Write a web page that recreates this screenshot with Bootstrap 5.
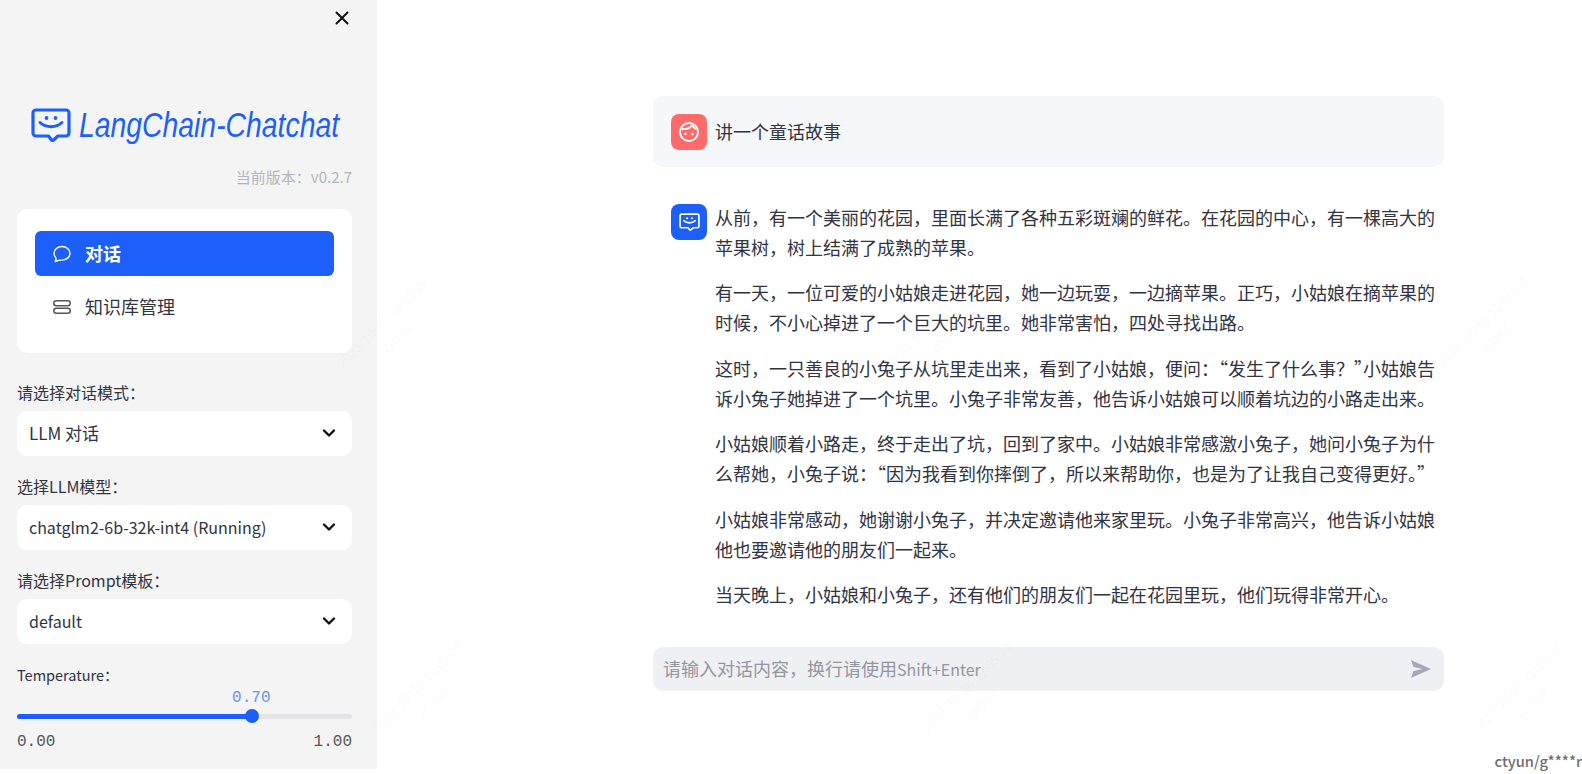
<!DOCTYPE html>
<html lang="zh-CN">
<head>
  <meta charset="UTF-8" />
  <title>LangChain-Chatchat</title>
  <meta name="viewport" content="width=device-width, initial-scale=1" />
  <link rel="stylesheet" href="https://cdn.jsdelivr.net/npm/bootstrap@5.3.0/dist/css/bootstrap.min.css" />
  <style>
    html, body { height: 774px; overflow: hidden; }
    body { font-family: "Noto Sans CJK SC", "Noto Sans", sans-serif; color: #31333f; background: #fff; }
    .side-panel { width: 377px; height: 769px; background: #f4f4f5; padding: 0 25px 0 17px; flex-shrink: 0; }
    .side-panel > * { flex-shrink: 0; }
    .close-btn { height: 36px; padding-right: 3px; margin-bottom: -2px; }
    .logo-row { margin-top: 74px; height: 34px; padding-left: 14px; color: #1c5ffb; }
    .logo-row svg { flex-shrink: 0; }
    .logo-text { font-family: "Liberation Sans", sans-serif; font-style: italic; font-size: 35px; line-height: 34px; white-space: nowrap; transform: scaleX(.81); transform-origin: left center; }
    .version-line { margin-top: 25px; font-size: 15px; line-height: 20px; color: #b3b5ba; }
    .menu-box { margin-top: 22px; height: 144px; background: #fff; border-radius: 10px; padding: 22px 18px; }
    .menu-item { height: 45px; border-radius: 6px; padding-left: 18px; font-size: 18px; gap: 14px; color: #31333f; }
    .menu-item.is-active { background: #1c5ffb; color: #fff; font-weight: 700; }
    .menu-item + .menu-item { margin-top: 8px; }
    .field-label { font-size: 16px; line-height: 24px; margin-bottom: 7px; color: #31333f; }
    .first-label { margin-top: 27px; }
    .model-select { height: 45px; border: 0; border-radius: 10px; padding: 0 36px 2px 12px; font-size: 16px; color: #31333f; margin-bottom: 18px;
      background-color: #fff; background-position: right 16px top 17px; background-size: 14px 10px;
      background-image: url("data:image/svg+xml,%3csvg xmlns='http://www.w3.org/2000/svg' viewBox='0 0 14 10'%3e%3cpath fill='none' stroke='%23111' stroke-width='2.4' stroke-linecap='round' stroke-linejoin='round' d='M2 2.5l5 5 5-5'/%3e%3c/svg%3e"); }
    .model-select.mode-select { font-size: 17px; }
    .temp-label { font-size: 14.5px; line-height: 26px; }
    .mono-num { font-family: "Liberation Mono", monospace; font-size: 16px; line-height: 18px; color: #555; }
    .temp-value { color: #6f8ff5; width: calc(70% + 19px); text-align: right; margin-top: 1px; }
    .track-wrap { height: 14px; margin-top: 2px; position: relative; }
    .temp-track { height: 5px; background: #e4e4e7; border-radius: 3px; }
    .temp-track .progress-bar { background: #1c5ffb; }
    .temp-thumb { position: absolute; top: 0; left: calc(70% - 7px); width: 14px; height: 14px; border-radius: 50%; background: #1c5ffb; }
    .range-ends { margin-top: 10px; }
    .chat-col { width: 791px; margin-left: 276px; padding-top: 96px; font-size: 18px; line-height: 29.6px; color: #31333f; }
    .msg-box { border-radius: 10px; padding: 17px 18px; gap: 8px; }
    .msg-user { background: #f6f7f9; height: 71px; align-items: center; }
    .msg-bot { margin-top: 20px; padding-top: 16px; padding-bottom: 0; height: 455px; padding-right: 8px; }
    .msg-bot p { margin-bottom: 16.3px; }
    .avatar-box { width: 36px; height: 36px; border-radius: 8px; flex-shrink: 0; }
    .msg-bot .avatar-box { margin-top: 1px; }
    .avatar-user { background: #ff6b6b; }
    .avatar-bot { background: #1c5ffb; }
    .close-quote { font-feature-settings: "halt"; }
    .input-bar { height: 44px; background: #eff0f4; border-radius: 10px; padding: 0 12px 0 10px; margin-top: 5px; color: #94969f; }
    .hint-key { font-size: 16px; }
    .account-tag { position: absolute; right: 0; bottom: 3px; font-size: 14.7px; line-height: 20px; font-weight: 500; color: #6e6e6e; }
    .mark-layer { position: absolute; inset: 0; pointer-events: none; overflow: hidden; }
    .mark-row { gap: 360px; }
    .mark-row.upper { padding: 308px 0 0 295px; }
    .mark-row.lower { padding: 321px 0 0 330px; }
    .mark-item { transform: rotate(-45deg); width: 190px; flex-shrink: 0; text-align: center; font-size: 13px; line-height: 22px; color: rgba(120, 120, 130, .05); white-space: nowrap; }
  </style>
</head>
<body class="position-relative">
  <svg width="0" height="0" class="position-absolute">
    <symbol id="botFace" viewBox="0 0 40 34">
      <path d="M5 2h30a3 3 0 0 1 3 3v20a3 3 0 0 1-3 3h-8l-4.500 4a1.500 1.500 0 0 1-2 0l-3-4H5a3 3 0 0 1-3-3V5a3 3 0 0 1 3-3z" fill="none" stroke="currentColor" stroke-width="3.200" stroke-linejoin="round" />
      <circle cx="15.500" cy="10" r="1.900" fill="currentColor" />
      <circle cx="24.500" cy="10" r="1.900" fill="currentColor" />
      <path d="M9 14.500c6 5.500 16 5.500 22 0" fill="none" stroke="currentColor" stroke-width="3" stroke-linecap="round" />
    </symbol>
  </svg>

  <div class="d-flex">
    <aside class="side-panel d-flex flex-column">
      <div class="close-btn d-flex justify-content-end align-items-center">
        <svg width="14" height="14" viewBox="0 0 14 14"><path d="M1.500 1.500l11 11M12.500 1.500l-11 11" stroke="#111" stroke-width="2" stroke-linecap="round" /></svg>
      </div>
      <div class="logo-row d-flex align-items-center gap-2">
        <svg width="40" height="34"><use href="#botFace" /></svg>
        <span class="logo-text">LangChain-Chatchat</span>
      </div>
      <div class="version-line text-end">当前版本：v0.2.7</div>

      <div class="menu-box">
        <div class="menu-item is-active d-flex align-items-center">
          <svg width="18" height="18" viewBox="0 0 18 18"><path d="M9 1.500c4.400 0 8 3 8 6.800s-3.600 6.800-8 6.800c-1.500 0-3-.1-6.800 1.400.8-1.500 1-2.600.7-3.600C1.800 11.700 1 10 1 8.300 1 4.500 4.600 1.500 9 1.500z" fill="none" stroke="#fff" stroke-width="1.400" stroke-linejoin="round" /></svg>
          <span>对话</span>
        </div>
        <div class="menu-item d-flex align-items-center">
          <svg width="18" height="14" viewBox="0 0 18 14"><rect x=".8" y=".8" width="16.400" height="5" rx="2.500" fill="none" stroke="#555" stroke-width="1.500" /><rect x=".8" y="8.200" width="16.400" height="5" rx="2.500" fill="none" stroke="#555" stroke-width="1.500" /></svg>
          <span>知识库管理</span>
        </div>
      </div>

      <label class="field-label first-label">请选择对话模式：</label>
      <select class="form-select model-select mode-select"><option>LLM 对话</option></select>
      <label class="field-label">选择LLM模型：</label>
      <select class="form-select model-select"><option>chatglm2-6b-32k-int4 (Running)</option></select>
      <label class="field-label">请选择Prompt模板：</label>
      <select class="form-select model-select"><option>default</option></select>

      <div class="temp-label">Temperature：</div>
      <div class="mono-num temp-value">0.70</div>
      <div class="track-wrap d-flex align-items-center">
        <div class="progress temp-track w-100"><div class="progress-bar" style="width: 70%"></div></div>
        <div class="temp-thumb"></div>
      </div>
      <div class="d-flex justify-content-between mono-num range-ends"><span>0.00</span><span>1.00</span></div>
    </aside>

    <main class="chat-col">
      <div class="msg-box msg-user d-flex">
        <div class="avatar-box avatar-user d-flex align-items-center justify-content-center">
          <svg width="24" height="24" viewBox="0 0 24 24" fill="none" stroke="#fff" stroke-width="2"><circle cx="12" cy="12" r="9" /><path d="M5 9c4 .500 8-.500 10-4 1 2 2.500 3.500 4 4" stroke-width="1.800" /><circle cx="8.500" cy="14" r="1.200" fill="#fff" stroke="none" /><circle cx="15.500" cy="14" r="1.200" fill="#fff" stroke="none" /></svg>
        </div>
        <div>讲一个童话故事</div>
      </div>

      <div class="msg-box msg-bot d-flex">
        <div class="avatar-box avatar-bot d-flex align-items-center justify-content-center text-white">
          <svg width="21" height="18"><use href="#botFace" /></svg>
        </div>
        <div>
          <p>从前，有一个美丽的花园，里面长满了各种五彩斑斓的鲜花。在花园的中心，有一棵高大的苹果树，树上结满了成熟的苹果。</p>
          <p>有一天，一位可爱的小姑娘走进花园，她一边玩耍，一边摘苹果。正巧，小姑娘在摘苹果的时候，不小心掉进了一个巨大的坑里。她非常害怕，四处寻找出路。</p>
          <p>这时，一只善良的小兔子从坑里走出来，看到了小姑娘，便问：“发生了什么事？<span class="close-quote">”</span>小姑娘告诉小兔子她掉进了一个坑里。小兔子非常友善，他告诉小姑娘可以顺着坑边的小路走出来。</p>
          <p>小姑娘顺着小路走，终于走出了坑，回到了家中。小姑娘非常感激小兔子，她问小兔子为什么帮她，小兔子说：“因为我看到你摔倒了，所以来帮助你，也是为了让我自己变得更好。”</p>
          <p>小姑娘非常感动，她谢谢小兔子，并决定邀请他来家里玩。小兔子非常高兴，他告诉小姑娘他也要邀请他的朋友们一起来。</p>
          <p>当天晚上，小姑娘和小兔子，还有他们的朋友们一起在花园里玩，他们玩得非常开心。</p>
        </div>
      </div>

      <div class="input-bar d-flex align-items-center justify-content-between">
        <span>请输入对话内容，换行请使用<span class="hint-key">Shift+Enter</span></span>
        <svg width="22" height="20" viewBox="0 0 22 20"><path d="M1 1l20 9-20 9 2.500-7 9-2-9-2z" fill="#a6a8ba" /></svg>
      </div>
    </main>
  </div>

  <div class="mark-layer">
    <div class="mark-row upper d-flex">
      <div class="mark-item">2023/10/16 11:05:24<br />WONE</div>
      <div class="mark-item">2023/10/16 11:05:24<br />WONE</div>
      <div class="mark-item">2023/10/16 11:05:24<br />WONE</div>
    </div>
    <div class="mark-row lower d-flex">
      <div class="mark-item">2023/10/16 11:05:24<br />WONE</div>
      <div class="mark-item">2023/10/16 11:05:24<br />WONE</div>
      <div class="mark-item">2023/10/16 11:05:24<br />WONE</div>
    </div>
  </div>
  <div class="account-tag">ctyun/g****r</div>

  <script src="https://cdn.jsdelivr.net/npm/bootstrap@5.3.0/dist/js/bootstrap.bundle.min.js"></script>
</body>
</html>
